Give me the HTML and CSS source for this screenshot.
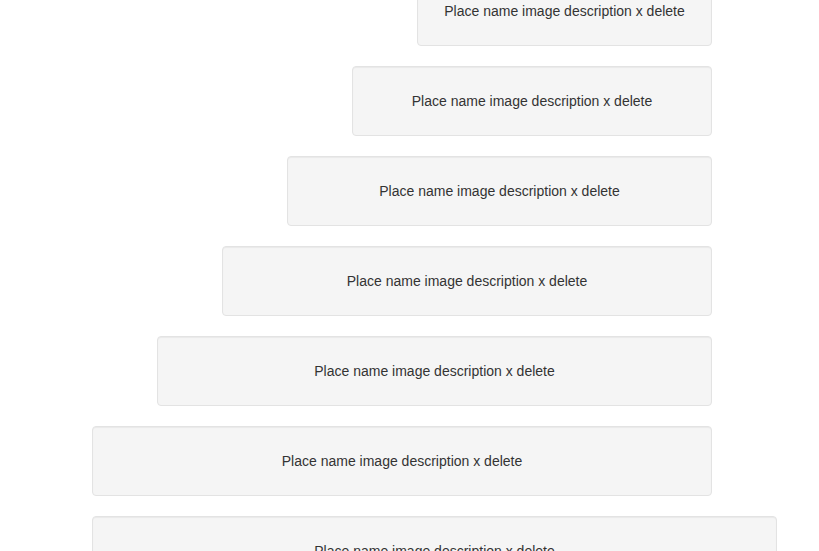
FILE: index.html
```html
<!DOCTYPE html>
<html lang="en">
<head>
  <meta charset="UTF-8">
  <meta name="viewport" content="width=device-width, initial-scale=1.0">
  <title>Places</title>
  <link rel="stylesheet" href="styles.css">
</head>
<body>

  <div class="places">
    <div class="well w1">Place name image description x delete</div>
    <div class="well w2">Place name image description x delete</div>
    <div class="well w3">Place name image description x delete</div>
    <div class="well w4">Place name image description x delete</div>
    <div class="well w5">Place name image description x delete</div>
    <div class="well w6">Place name image description x delete</div>
    <div class="well w7">Place name image description x delete</div>
  </div>

</body>
</html>
```

FILE: styles.css
```css
body { margin: 0; font-family: "Liberation Sans", Arial, sans-serif; font-size: 14px; line-height: 20px; color: #333; background: #fff; }
.places { display: flex; flex-direction: column; width: 685px; margin: -24px 0 0 92px; }
.well { box-sizing: border-box; height: 70px; padding: 24px 10px; margin-bottom: 20px; text-align: center; white-space: nowrap; background: #f5f5f5; border: 1px solid #e3e3e3; border-radius: 4px; box-shadow: inset 0 1px 1px rgba(0,0,0,.05); }
.w1, .w2, .w3, .w4, .w5, .w6 { margin-right: 65px; align-self: flex-end; }
.w1 { width: 295px; }
.w2 { width: 360px; }
.w3 { width: 425px; }
.w4 { width: 490px; }
.w5 { width: 555px; }
.w6 { width: 620px; }
.w7 { width: 685px; }
```
